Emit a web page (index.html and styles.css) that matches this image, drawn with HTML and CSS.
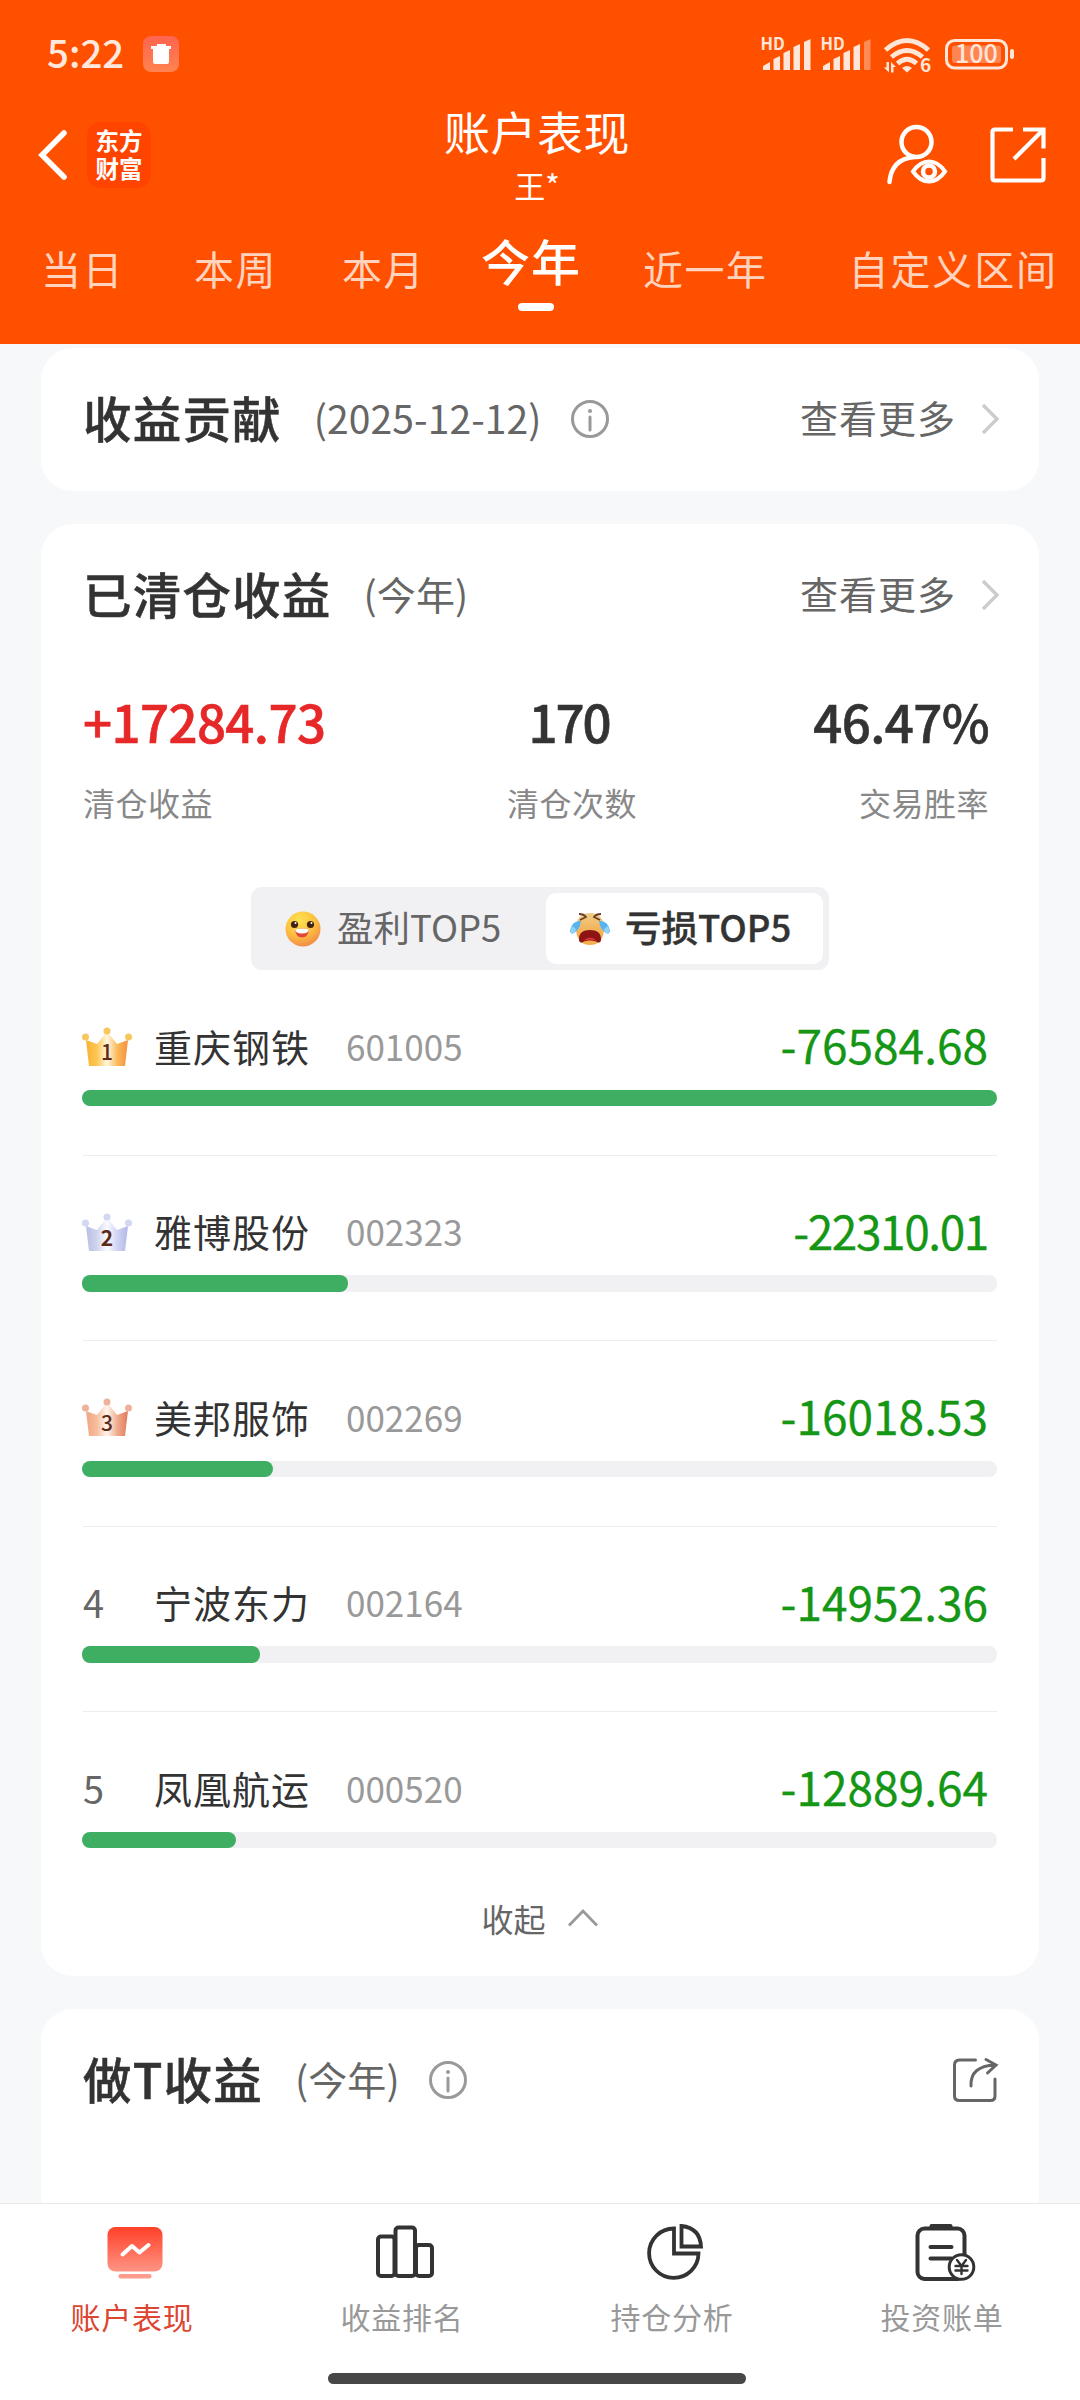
FILE: index.html
```html
<!DOCTYPE html>
<html lang="zh-CN">
  <head>
    <meta charset="UTF-8" />
    <title>账户表现</title>
    <link rel="stylesheet" href="styles.css">
  </head>

  <body>
    <div class="header">
      <div class="status">
        <div class="time">5:22</div>
        <svg class="trash" width="36" height="36" viewBox="0 0 36 36">
          <defs>
            <linearGradient id="tg" x1="0" y1="0" x2="0" y2="1">
              <stop offset="0" stop-color="#ff6450" />
              <stop offset="1" stop-color="#ff8350" />
            </linearGradient>
          </defs>
          <rect width="36" height="36" rx="8" fill="url(#tg)" />
          <path d="M14 8h9v2h5v3h-2v13q0 2-2 2H12q-2 0-2-2V13H8v-3h6z" fill="#fff" />
        </svg>
        <svg class="sys" width="256" height="54" viewBox="760 27 256 54" fill="#ffe6d8">
          <text class="hd" x="760.500" y="50">HD</text>
          <path d="M763 70v-4l7-4v8zM773.500 70V59l6.500-3v14zM783.500 70V53l6.500-3v20zM793.500 70V47l6.500-3v26zM804 70V42l6.500-3v31z" />
          <text class="hd" x="820.500" y="50">HD</text>
          <path d="M823 70v-4l7-4v8zM833.500 70V59l6.500-3v14zM843.500 70V53l6.500-3v20zM853.500 70V47l6.500-3v26z" />
          <path d="M864 70V42l6.500-3v31z" opacity=".4" />
          <g fill="none" stroke="#ffe6d8" stroke-width="4.800">
            <path d="M885.500 50Q907 31 928.500 50" />
            <path d="M891.500 57Q907 44 922.500 57" />
            <path d="M897.500 63.500Q907 55 916.500 63.500" />
          </g>
          <path d="M902 68q5-4 10 0l-5 4.500z" />
          <path d="M889 62v10.500l-5-5h2.500V62zM891 72.500V62l5 5h-2.500v5.500z" />
          <text class="six" x="920" y="72">6</text>
          <rect x="946.500" y="40.500" width="60" height="27.500" rx="8" fill="none" stroke="#ffe6d8" stroke-width="3" />
          <rect x="952" y="45.500" width="49" height="17.500" rx="3" fill="#ff8450" />
          <rect x="1010" y="49" width="4" height="10" rx="2" />
          <text class="bat" x="976.500" y="62.500" text-anchor="middle">100</text>
        </svg>
      </div>

      <div class="topbar">
        <svg class="back" width="30" height="52" viewBox="0 0 30 52">
          <path d="M26 4L4 26l22 22" fill="none" stroke="#fff" stroke-width="5.500" stroke-linecap="round" />
        </svg>
        <div class="logo">东方<br>财富</div>
        <div class="title">
          <div class="t1">账户表现</div>
          <div class="t2">王*</div>
        </div>
        <svg class="user" width="62" height="62" viewBox="887 124 62 62" fill="none" stroke="#fff" stroke-width="4.500">
          <circle cx="917.500" cy="142" r="15" />
          <path d="M890.500 182q2-23 25-25" stroke-linecap="round" />
          <path d="M914 171.500q7-10 16-10t16 10q-7 10-16 10t-16-10z" stroke-width="4" />
          <circle cx="930" cy="171.500" r="6" />
        </svg>
        <svg class="share" width="56" height="56" viewBox="0 0 56 56" fill="none" stroke="#fff" stroke-width="4.200">
          <path d="M23 2.500H5Q2.500 2.500 2.500 5v46q0 2.500 2.500 2.500h46q2.500 0 2.500-2.500V31" />
          <path d="M33 2.500h20.500v19M53 3L24 32" />
        </svg>
      </div>

      <div class="tabs">
        <div class="tab">当日</div>
        <div class="tab">本周</div>
        <div class="tab">本月</div>
        <div class="tab on">今年</div>
        <div class="tab">近一年</div>
        <div class="tab">自定义区间</div>
      </div>
    </div>

    <div class="main">
      <div class="card">
        <div class="head">
          <div class="name">收益贡献</div>
          <div class="sub">(2025-12-12)</div>
          <svg class="info" width="38" height="38" viewBox="0 0 38 38" fill="none" stroke="#999">
            <circle cx="19" cy="19" r="17.500" stroke-width="3" />
            <path d="M19 17v13" stroke-width="3" stroke-linecap="round" />
            <circle cx="19" cy="11" r="2" fill="#999" stroke="none" />
          </svg>
          <div class="more">查看更多</div>
          <svg class="arrow" width="20" height="32" viewBox="0 0 20 32">
            <path d="M3 2l14 14L3 30" fill="none" stroke="#ccc" stroke-width="3.400" />
          </svg>
        </div>
      </div>

      <div class="card">
        <div class="head">
          <div class="name">已清仓收益</div>
          <div class="sub">(今年)</div>
          <div class="more">查看更多</div>
          <svg class="arrow" width="20" height="32" viewBox="0 0 20 32">
            <path d="M3 2l14 14L3 30" fill="none" stroke="#ccc" stroke-width="3.400" />
          </svg>
        </div>

        <div class="stats">
          <div class="stat">
            <div class="val red">+17284.73</div>
            <div class="label">清仓收益</div>
          </div>
          <div class="stat mid">
            <div class="val">170</div>
            <div class="label">清仓次数</div>
          </div>
          <div class="stat right">
            <div class="val">46.47%</div>
            <div class="label">交易胜率</div>
          </div>
        </div>

        <div class="switch">
          <div class="opt">
            <svg width="36" height="36" viewBox="0 0 36 36">
              <defs>
                <radialGradient id="smile" cx=".4" cy=".25" r=".8">
                  <stop offset="0" stop-color="#ffe14f" />
                  <stop offset=".55" stop-color="#fcc03f" />
                  <stop offset="1" stop-color="#f2854a" />
                </radialGradient>
              </defs>
              <circle cx="18" cy="18" r="17.500" fill="url(#smile)" />
              <circle cx="9.500" cy="13.500" r="3.600" fill="#41220f" />
              <circle cx="25.500" cy="13.500" r="3.600" fill="#41220f" />
              <circle cx="10.500" cy="12" r="1" fill="#fff" />
              <circle cx="26.500" cy="12" r="1" fill="#fff" />
              <path d="M10 18.500q8-2 14 0-1 8-7 8t-7-8z" fill="#e2473b" />
              <path d="M10 18.500q8-2 14 0-.5 4-7 4t-7-4z" fill="#fff" />
            </svg>
            <span>盈利TOP5</span>
          </div>
          <div class="opt on">
            <svg width="42" height="34" viewBox="0 0 42 34">
              <defs>
                <linearGradient id="cry" x1="0" y1="0" x2="0" y2="1">
                  <stop offset="0" stop-color="#f0cd88" />
                  <stop offset=".6" stop-color="#f3b056" />
                  <stop offset="1" stop-color="#f2b04a" />
                </linearGradient>
              </defs>
              <path d="M21 1c9 0 14 6 14 15 0 11-5 17-14 17S7 27 7 16C7 7 12 1 21 1z" fill="url(#cry)" />
              <path d="M10 2q5 0 7 3l-6 3M32 2q-5 0-7 3l6 3" fill="none" stroke="#6b3f26" stroke-width="1.800" />
              <path d="M12 9Q3 8 1 19q1 4 4 2 6-4 7-12zM30 9q9-1 11 10-1 4-4 2-6-4-7-12z" fill="#57b4f2" />
              <path d="M3 14q-2 5-1 7 4 1 5-4zM39 14q2 5 1 7-4 1-5-4z" fill="#8fd2fa" />
              <path d="M21 18c7 0 11 3 11 9 0 4-2 4-4 3-4-2-10-2-14 0-2 1-4 1-4-3 0-6 4-9 11-9z" fill="#8c1414" />
              <path d="M14 29q7-7 14 0-7-3-14 0z" fill="#e8353b" />
            </svg>
            <span>亏损TOP5</span>
          </div>
        </div>

        <div class="list">
          <div class="row">
            <div class="line">
              <div class="rank">
                <svg width="50" height="40" viewBox="0 0 50 40">
                  <defs>
                    <linearGradient id="c1">
                      <stop offset="0" stop-color="#f9b233" />
                      <stop offset=".25" stop-color="#fcc652" />
                      <stop offset=".5" stop-color="#fff6df" />
                      <stop offset=".75" stop-color="#fbb95a" />
                      <stop offset="1" stop-color="#f68f3e" />
                    </linearGradient>
                  </defs>
                  <path d="M4 13l11 4L23 7h4l8 10 11-4-3 26H7z" fill="url(#c1)" />
                  <g fill="#f8c75c"><circle cx="3.500" cy="10" r="3.500" /><circle cx="25" cy="4" r="3.500" /><circle cx="46.500" cy="10" r="3.500" /></g>
                  <text class="cn" x="25" y="32.500" text-anchor="middle">1</text>
                </svg>
              </div>
              <div class="stock">重庆钢铁</div>
              <div class="code">601005</div>
              <div class="money">-76584.68</div>
            </div>
            <div class="bar"><div class="fill" style="width: 100%"></div></div>
          </div>

          <div class="row">
            <div class="line">
              <div class="rank">
                <svg width="50" height="40" viewBox="0 0 50 40">
                  <defs>
                    <linearGradient id="c2">
                      <stop offset="0" stop-color="#b9bfe6" />
                      <stop offset=".25" stop-color="#cfd3ec" />
                      <stop offset=".5" stop-color="#fbfbff" />
                      <stop offset=".75" stop-color="#d0d3f3" />
                      <stop offset="1" stop-color="#b2b8e8" />
                    </linearGradient>
                  </defs>
                  <path d="M4 13l11 4L23 7h4l8 10 11-4-3 25H7z" fill="url(#c2)" />
                  <g fill="#d2d7f2"><circle cx="3.500" cy="10" r="3.500" /><circle cx="25" cy="4" r="3.500" /><circle cx="46.500" cy="10" r="3.500" /></g>
                  <text class="cn b" x="25" y="32.500" text-anchor="middle">2</text>
                </svg>
              </div>
              <div class="stock">雅博股份</div>
              <div class="code">002323</div>
              <div class="money tight">-22310.01</div>
            </div>
            <div class="bar"><div class="fill" style="width: 29.1%"></div></div>
          </div>

          <div class="row">
            <div class="line">
              <div class="rank">
                <svg width="50" height="40" viewBox="0 0 50 40">
                  <defs>
                    <linearGradient id="c3">
                      <stop offset="0" stop-color="#f0a582" />
                      <stop offset=".25" stop-color="#f6bd9d" />
                      <stop offset=".5" stop-color="#fff5ee" />
                      <stop offset=".75" stop-color="#efaa8b" />
                      <stop offset="1" stop-color="#e07a5c" />
                    </linearGradient>
                  </defs>
                  <path d="M4 13l11 4L23 7h4l8 10 11-4-3 25H7z" fill="url(#c3)" />
                  <g fill="#efb199"><circle cx="3.500" cy="10" r="3.500" /><circle cx="25" cy="4" r="3.500" /><circle cx="46.500" cy="10" r="3.500" /></g>
                  <text class="cn" x="25" y="32.500" text-anchor="middle">3</text>
                </svg>
              </div>
              <div class="stock">美邦服饰</div>
              <div class="code">002269</div>
              <div class="money">-16018.53</div>
            </div>
            <div class="bar"><div class="fill" style="width: 20.9%"></div></div>
          </div>

          <div class="row">
            <div class="line">
              <div class="rank">4</div>
              <div class="stock">宁波东力</div>
              <div class="code">002164</div>
              <div class="money">-14952.36</div>
            </div>
            <div class="bar"><div class="fill" style="width: 19.5%"></div></div>
          </div>

          <div class="row">
            <div class="line">
              <div class="rank">5</div>
              <div class="stock">凤凰航运</div>
              <div class="code">000520</div>
              <div class="money">-12889.64</div>
            </div>
            <div class="bar"><div class="fill" style="width: 16.8%"></div></div>
          </div>
        </div>

        <div class="fold">
          <span>收起</span>
          <svg width="32" height="18" viewBox="0 0 32 18">
            <path d="M2 16.500L16 2l14 14.500" fill="none" stroke="#999" stroke-width="2.800" />
          </svg>
        </div>
      </div>

      <div class="card last">
        <div class="head">
          <div class="name">做T收益</div>
          <div class="sub">(今年)</div>
          <svg class="info" width="38" height="38" viewBox="0 0 38 38" fill="none" stroke="#999">
            <circle cx="19" cy="19" r="17.500" stroke-width="3" />
            <path d="M19 17v13" stroke-width="3" stroke-linecap="round" />
            <circle cx="19" cy="11" r="2" fill="#999" stroke="none" />
          </svg>
          <svg class="out" width="46" height="46" viewBox="952 2058 46 46" fill="none" stroke="#666" stroke-width="3" stroke-linecap="round">
            <path d="M975.500 2061h-16q-5 0-5 5v31q0 4.500 5 4.500h31q4.500 0 4.500-4.500v-17" />
            <path d="M971 2087q-1-20 24-21M986 2060.500l10 5.500-8.500 8" />
          </svg>
        </div>
      </div>
    </div>

    <div class="nav">
      <div class="item on">
        <svg width="64" height="60" viewBox="103 2222 64 60">
          <defs>
            <linearGradient id="nv" x1="0" y1="0" x2="0" y2="1">
              <stop offset="0" stop-color="#ff4027" />
              <stop offset="1" stop-color="#ff9484" />
            </linearGradient>
          </defs>
          <rect x="107.500" y="2227" width="55" height="44.500" rx="8" fill="url(#nv)" />
          <rect x="118.500" y="2274" width="33" height="4.500" rx="2" fill="#ff9c8c" />
          <path d="M122.500 2254.500l9.500-8.500 7.500 6.500 9-7.500" fill="none" stroke="#fff" stroke-width="4" stroke-linecap="round" stroke-linejoin="round" />
        </svg>
        <span>账户表现</span>
      </div>
      <div class="item">
        <svg width="64" height="60" viewBox="373 2222 64 60" fill="none" stroke="#333" stroke-width="4">
          <rect x="378" y="2236.500" width="16.500" height="39.500" rx="3" />
          <rect x="395.500" y="2227.500" width="19.500" height="48.500" rx="3" />
          <rect x="416" y="2245" width="16" height="31" rx="3" />
        </svg>
        <span>收益排名</span>
      </div>
      <div class="item">
        <svg width="64" height="60" viewBox="643 2222 64 60" fill="none" stroke="#333" stroke-width="3.800">
          <path d="M674 2228.500v25h24.500a24.700 24.700 0 1 1-24.500-25z" />
          <path d="M681.500 2226v20.500H701q-1-18.500-19.500-20.500z" />
        </svg>
        <span>持仓分析</span>
      </div>
      <div class="item">
        <svg width="64" height="60" viewBox="913 2222 64 60" fill="none" stroke="#333" stroke-width="4">
          <rect x="917.500" y="2228.500" width="47" height="50.500" rx="7" />
          <rect x="929.500" y="2224" width="23" height="5.500" rx="2" fill="#333" stroke="none" />
          <path d="M930.500 2247h21M930.500 2258.500h21" stroke-linecap="round" />
          <circle cx="961.500" cy="2267" r="12.300" fill="#fff" stroke-width="3" />
          <path d="M957 2260l4.500 6 4.500-6M955.500 2266h12M955.500 2270.500h12M961.500 2266v8" stroke-width="2.400" stroke-linecap="round" />
        </svg>
        <span>投资账单</span>
      </div>
    </div>
    <div class="home"><div class="pill"></div></div>
  </body>
</html>
```
FILE: styles.css
```css
body {
  margin: 0;
  width: 1080px;
  height: 2400px;
  overflow: hidden;
  display: flex;
  flex-direction: column;
  font-family: "Noto Sans CJK SC", sans-serif;
  background: #f7f8fa;
  color: #333;
  white-space: nowrap;
}

svg {
  display: block;
  flex-shrink: 0;
  overflow: visible;
}

/* 头部 */
.header {
  height: 344px;
  flex-shrink: 0;
  background: #ff5000;
  color: #fff;
}

.status {
  height: 105px;
  display: flex;
  align-items: center;
  padding: 0 64px 0 47px;
}

.time {
  width: 96px;
  padding-bottom: 3px;
  font-size: 38.5px;
  font-weight: 500;
  line-height: 50px;
  color: #ffe9dc;
}

.trash {
  margin-top: 3px;
}

.sys {
  margin-left: auto;
  margin-top: 3px;
}

.hd {
  font-size: 16.5px;
  font-weight: 700;
}

.six {
  font-size: 19px;
  font-weight: 700;
}

.bat {
  font-size: 25px;
  font-weight: 500;
}

.topbar {
  height: 100px;
  display: flex;
  align-items: center;
  padding: 0 34px 0 38px;
}

.logo {
  width: 64px;
  height: 66px;
  margin-left: 19px;
  box-sizing: border-box;
  padding-top: 4px;
  border-radius: 14px;
  background: #ff4400;
  font-size: 23.5px;
  font-weight: 700;
  line-height: 28px;
  text-align: center;
}

.title {
  width: 300px;
  margin-left: 236px;
  text-align: center;
}

.t1 {
  font-size: 46px;
  line-height: 50px;
  letter-spacing: 0.5px;
}

.t2 {
  margin-top: 9px;
  font-size: 31px;
  line-height: 41px;
}

.user {
  margin-left: auto;
}

.share {
  margin-left: 42px;
}

.tabs {
  display: flex;
  padding: 25px 0 0 41px;
}

.tab {
  padding-top: 8px;
  margin-left: 62px;
  font-size: 40px;
  line-height: 60px;
  letter-spacing: 1.5px;
  color: #ffd3bd;
}

.tab:first-child {
  margin-left: 0;
}

.tab:nth-child(2) {
  margin-left: 70px;
}

.tab:nth-child(3) {
  margin-left: 65px;
}

.tab:nth-child(6) {
  margin-left: 81px;
  letter-spacing: 1.9px;
}

.tab.on {
  margin-left: 56px;
  padding-top: 0;
  font-size: 49px;
  font-weight: 500;
  letter-spacing: 1px;
  color: #fff;
}

.tab.on::after {
  content: "";
  display: block;
  width: 36px;
  height: 8px;
  margin: 13px 0 0 37px;
  border-radius: 4px;
  background: #fff;
}

/* 内容 */
.main {
  flex: 1;
  min-height: 0;
  overflow: hidden;
  padding: 4px 41px 0;
}

.card {
  box-sizing: border-box;
  padding: 0 42px;
  margin-bottom: 33px;
  border-radius: 32px;
  background: #fff;
}

.card:first-child {
  height: 143px;
}

.card:nth-child(2) {
  height: 1452px;
}

.card.last {
  height: 260px;
}

.head {
  height: 137px;
  display: flex;
  align-items: center;
}

.name {
  font-size: 48.5px;
  font-weight: 500;
  letter-spacing: 1.2px;
  -webkit-text-stroke: 0.5px #333;
}

.sub {
  margin-left: 32px;
  font-size: 39px;
  letter-spacing: 0.1px;
  color: #666;
}

.info {
  margin: 5px 0 0 29px;
}

.more {
  margin-left: auto;
  font-size: 38px;
  letter-spacing: 1px;
  color: #666;
}

.arrow {
  margin: 5px -3px 0 24px;
}

.out {
  margin: 5px -1px 0 auto;
}

.stats {
  display: grid;
  grid-template-columns: 424px 130px 1fr;
  padding: 30px 8px 0 0;
}

.mid {
  text-align: center;
}

.right {
  text-align: right;
}

.val {
  font-size: 51px;
  font-weight: 500;
  line-height: 60px;
  letter-spacing: -0.6px;
  -webkit-text-stroke: 0.6px;
}

.mid .val {
  letter-spacing: -2px;
  text-indent: -6px;
}

.red {
  color: #e62828;
}

.label {
  margin-top: 31px;
  font-size: 32px;
  line-height: 40px;
  letter-spacing: 0.5px;
  color: #888;
}

.switch {
  width: 578px;
  height: 83px;
  margin: 65px auto 0;
  box-sizing: border-box;
  padding: 6px;
  display: flex;
  border-radius: 11px;
  background: #f1f1f4;
}

.opt {
  width: 261px;
  padding-left: 28px;
  display: flex;
  align-items: center;
  font-size: 36.5px;
  color: #666;
}

.opt span {
  margin-left: 16px;
  padding-bottom: 4px;
}

.opt.on {
  width: 254px;
  padding-left: 23px;
  border-radius: 10px;
  background: #fff;
  font-weight: 500;
  color: #333;
}

.opt.on span {
  margin-left: 14px;
  -webkit-text-stroke: 0.4px;
}

.row {
  height: 134.5px;
  padding-top: 50px;
  border-bottom: 1px solid #ececec;
}

.row:last-child {
  border-color: transparent;
}

.line {
  display: flex;
  align-items: center;
  height: 50px;
  padding-right: 9px;
}

.rank {
  width: 71px;
  font-size: 38px;
  color: #666;
}

.rank svg {
  margin: 4px 0 0 -1px;
}

.cn {
  font-size: 21px;
  font-weight: 500;
  fill: #5a2a1a;
}

.cn.b {
  font-weight: 700;
}

.stock {
  font-size: 38px;
  letter-spacing: 1px;
}

.code {
  margin-left: 36px;
  font-size: 35px;
  color: #999;
}

.money {
  margin-left: auto;
  padding-bottom: 2px;
  font-size: 46px;
  -webkit-text-stroke: 0.3px;
  color: #159615;
}

.money.tight {
  letter-spacing: -1.4px;
}

.bar {
  height: 16.5px;
  margin: 19.5px 0 0 -1px;
  border-radius: 8px;
  background: #f1f1f4;
}

.fill {
  height: 100%;
  border-radius: 8px;
  background: #3eae62;
}

.fold {
  height: 40px;
  display: flex;
  align-items: center;
  justify-content: center;
  font-size: 32px;
  color: #666;
}

.fold svg {
  margin-left: 21px;
}

/* 底部导航 */
.nav {
  height: 150px;
  flex-shrink: 0;
  display: flex;
  border-top: 1px solid #e8e8e8;
  background: #fff;
}

.item {
  width: 270px;
  padding-top: 18px;
  display: flex;
  flex-direction: column;
  align-items: center;
  font-size: 30px;
  line-height: 40px;
  letter-spacing: 0.8px;
  color: #999;
}

.item span {
  margin-top: 14px;
  padding-right: 6px;
}

.item.on {
  color: #dc4632;
}

.home {
  height: 46px;
  flex-shrink: 0;
  background: #fff;
}

.pill {
  width: 418px;
  height: 11px;
  margin: 19px 0 0 328px;
  border-radius: 6px;
  background: #474747;
}
```
